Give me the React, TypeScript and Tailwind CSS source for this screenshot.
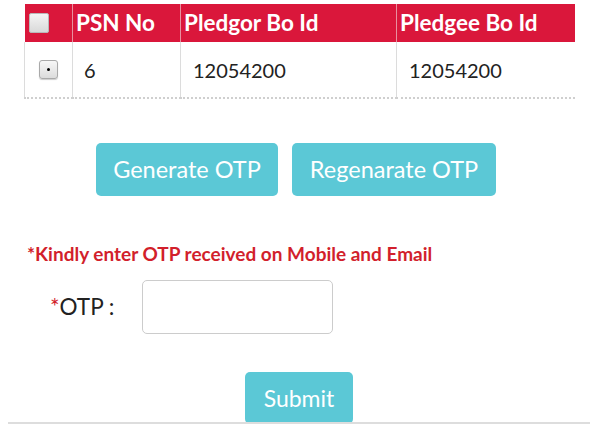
const font = { fontFamily: 'Lato, "Open Sans", sans-serif' };

function HeaderCheck() {
  return (
    <div className="h-[20px] w-[20px] rounded-[2px] border border-[#b9b9b9] bg-gradient-to-b from-[#f4f4f4] to-[#d9d9d9]" />
  );
}

function RowCheck() {
  return (
    <div className="flex h-[19px] w-[19px] items-center justify-center rounded-[3px] border border-[#a9a9a9] bg-gradient-to-b from-[#f7f7f7] to-[#dcdcdc] shadow-[0_1px_1px_rgba(0,0,0,0.2)]">
      <div className="h-[3px] w-[3px] rounded-full bg-black" />
    </div>
  );
}

export default function App() {
  return (
    <div className="relative h-[426px] w-[600px] overflow-hidden bg-white" style={font}>
      <div className="pl-[24px] pt-[4px]">
        <table className="w-[551px] table-fixed border-collapse">
          <thead>
            <tr className="h-[38px] bg-[#da173b] text-left text-[22.5px] font-bold text-white">
              <th className="w-[48px] border-r border-[#e8909f] pl-[4px] align-middle">
                <HeaderCheck />
              </th>
              <th className="w-[108px] border-r border-[#e8909f] pl-[3px] font-bold">PSN No</th>
              <th className="w-[216px] border-r border-[#e8909f] pl-[3px] font-bold">Pledgor Bo Id</th>
              <th className="pl-[3px] font-bold">Pledgee Bo Id</th>
            </tr>
          </thead>
          <tbody>
            <tr className="h-[56px] border-b-2 border-dotted border-[#cfcfcf] text-[20px] text-[#222]">
              <td className="border-l border-r border-[#dcdcdc] pl-[14px] align-middle">
                <RowCheck />
              </td>
              <td className="border-r border-[#dcdcdc] pl-[11px]">6</td>
              <td className="border-r border-[#dcdcdc] pl-[12px]">12054200</td>
              <td className="pl-[12px]">12054200</td>
            </tr>
          </tbody>
        </table>
      </div>

      <div className="mt-[44px] flex justify-center gap-[14px] pr-[8px]">
        <button className="h-[53px] w-[182px] rounded-[5px] bg-[#5bc8d6] text-[23.5px] text-white">
          Generate OTP
        </button>
        <button className="h-[53px] w-[204px] rounded-[5px] bg-[#5bc8d6] text-[23.5px] text-white">
          Regenarate OTP
        </button>
      </div>

      <p className="mt-[45px] pl-[27px] text-[19px] font-bold leading-[26px] text-[#d21f2c]">
        *Kindly enter OTP received on Mobile and Email
      </p>

      <div className="mt-[13px] flex items-center">
        <label className="w-[142px] pl-[50px] text-[22.5px] text-[#222]">
          <span className="text-[#d21f2c]">*</span>OTP :
        </label>
        <input className="h-[54px] w-[191px] rounded-[5px] border border-[#cccccc] bg-white outline-none" />
      </div>

      <div className="mt-[38px] flex justify-center">
        <button className="ml-[-2px] h-[52px] w-[108px] rounded-[5px] bg-[#5bc8d6] text-[23px] text-white">
          Submit
        </button>
      </div>

      <div className="absolute left-[8px] top-[422px] h-[2px] w-[582px] bg-[#dddddd]" />
    </div>
  );
}
